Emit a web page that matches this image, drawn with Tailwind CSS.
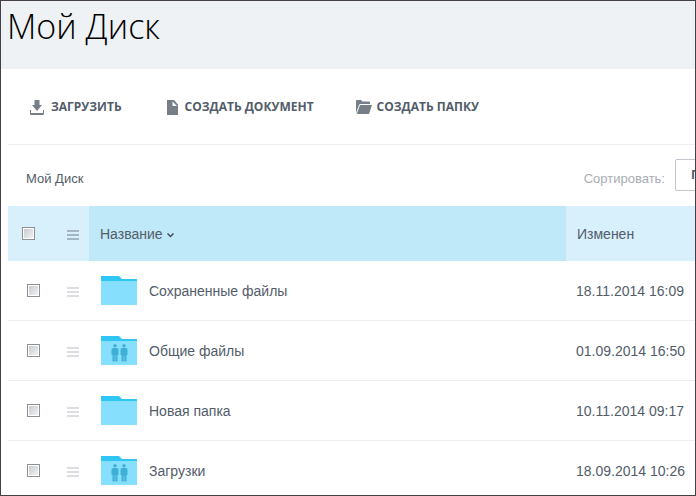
<!DOCTYPE html>
<html lang="ru">
<head>
<meta charset="utf-8">
<title>Мой Диск</title>
<script src="https://cdn.jsdelivr.net/npm/@tailwindcss/browser@4"></script>
</head>
<body class="h-screen overflow-hidden border border-[#444046] bg-white font-['Liberation_Sans',Arial,sans-serif] text-sm text-[#535c69]">
<svg class="hidden">
  <symbol id="folder" viewBox="0 0 36 29">
    <path d="M0 0H18L21 3H36V29H0Z" fill="#2fc6f7"/>
    <path d="M0 5H36V29H0Z" fill="#86dffc"/>
  </symbol>
  <symbol id="person" viewBox="0 0 8 18">
    <circle cx="4" cy="1.8" r="1.700"/>
    <path d="M2 4H6Q7.500 4 7.500 5.500V11H6.500V17.500H4.300V11.500H3.700V17.500H1.500V11H.5V5.500Q.5 4 2 4Z"/>
  </symbol>
  <symbol id="shared" viewBox="0 0 36 29">
    <use href="#folder" width="36" height="29"/>
    <g fill="#3fafd8"><use href="#person" x="10" y="8" width="8" height="18"/><use href="#person" x="19" y="8" width="8" height="18"/></g>
  </symbol>
  <symbol id="bars" viewBox="0 0 12 10">
    <path d="M0 0H12V2H0ZM0 4H12V6H0ZM0 8H12V10H0Z"/>
  </symbol>
</svg>

<header class="h-17 bg-[#eef2f4] pl-[6px]">
  <h1 class="font-['Open_Sans',sans-serif] text-[34px] leading-[50px] font-light text-black">Мой Диск</h1>
</header>

<main class="pl-[7px]">
  <nav class="flex h-19 items-center border-b border-[#eceef0] pt-px pl-[22px] font-['Open_Sans',sans-serif] text-xs leading-5 font-bold text-[#535c69]" aria-label="Действия">
    <button type="button" class="flex items-center gap-[7px] whitespace-nowrap">
      <svg class="h-[15px] w-[14px]" viewBox="0 0 14 15" fill="#767f88"><path d="M4.500 0H9.500V5H12L7 11L2 5H4.500Z"/><path d="M0 10H1V13H13V10H14V14Q14 15 13 15H1Q0 15 0 14Z"/></svg>
      ЗАГРУЗИТЬ</button>
    <button type="button" class="ml-[45px] flex items-center gap-[7px] whitespace-nowrap">
      <svg class="h-[15px] w-[11px]" viewBox="0 0 11 15" fill="#767f88"><path fill-rule="evenodd" d="M0 0H7L11 4.500V15H0ZM5.500 1.500V6H10Z"/></svg>
      СОЗДАТЬ ДОКУМЕНТ</button>
    <button type="button" class="ml-[42px] flex items-center gap-[5px] whitespace-nowrap">
      <svg class="h-[14px] w-4" viewBox="0 0 16 14" fill="#767f88"><path d="M0 13V1Q0 0 1 0H5L6.500 1.500H13Q14 1.500 14 2.500V4H4.500Q3.500 4 3 5Z"/><path d="M4.500 5H16L13 14H.8L3.800 5.500Z"/></svg>
      СОЗДАТЬ ПАПКУ</button>
  </nav>

  <div class="flex h-[61px] items-center justify-between overflow-hidden pl-[18px] text-[13px]">
    <a href="#" class="pt-2">Мой Диск</a>
    <div class="-mr-[140px] flex items-center gap-[10px] pb-px">
      <label for="sort" class="pt-2 text-[#a8adb4]">Сортировать:</label>
      <select id="sort" class="h-8 w-40 appearance-none rounded-[2px] border border-[#c2c6cc] bg-white pl-[15px] font-['Open_Sans',sans-serif] text-xs font-bold text-[#535c69]"><option>По названию</option></select>
    </div>
  </div>

  <table class="w-full table-fixed border-separate border-spacing-0 text-left">
    <colgroup><col class="w-[49px]"><col class="w-8"><col><col class="w-[129px]"></colgroup>
    <thead>
      <tr class="h-[55px] bg-[#d7f0fc]">
        <th class="pl-[14px]"><input type="checkbox" aria-label="Выбрать все" class="block size-[13px] appearance-none border border-[#8e8f8f] bg-linear-to-br from-[#c3c8ce] to-[#f6f6f6] ring-1 ring-white ring-inset"></th>
        <th class="pl-[10px]"><button type="button" aria-label="Меню" class="block pt-[2px]"><svg class="h-[10px] w-3 fill-[#a3b5c2]"><use href="#bars"/></svg></button></th>
        <th class="bg-[#bfe9f8] pl-[11px] font-normal"><button type="button" class="flex items-center gap-1">Название<svg class="mt-[3px] h-[5px] w-[7px]" viewBox="0 0 7 5" fill="none" stroke="#3f4d62" stroke-width="1.500"><path d="M.5 .5L3.500 3.500L6.500 .5"/></svg></button></th>
        <th class="pl-[11px] font-normal">Изменен</th>
      </tr>
    </thead>
    <tbody>
      <tr class="h-[60px] *:border-b *:border-[#eceef0]">
        <td class="pl-[19px]"><input type="checkbox" aria-label="Сохраненные файлы" class="block size-[13px] appearance-none border border-[#8e8f8f] bg-linear-to-br from-[#c3c8ce] to-[#f6f6f6] ring-1 ring-white ring-inset"></td>
        <td class="pl-[10px]"><button type="button" aria-label="Меню" class="block pt-[2px]"><svg class="h-[10px] w-3 fill-[#dcdee3]"><use href="#bars"/></svg></button></td>
        <td class="pl-3"><a href="#" class="flex items-center gap-3"><svg class="h-[29px] w-9"><use href="#folder"/></svg>Сохраненные файлы</a></td>
        <td class="pl-[10px] whitespace-nowrap">18.11.2014 16:09</td>
      </tr>
      <tr class="h-[60px] *:border-b *:border-[#eceef0]">
        <td class="pl-[19px]"><input type="checkbox" aria-label="Общие файлы" class="block size-[13px] appearance-none border border-[#8e8f8f] bg-linear-to-br from-[#c3c8ce] to-[#f6f6f6] ring-1 ring-white ring-inset"></td>
        <td class="pl-[10px]"><button type="button" aria-label="Меню" class="block pt-[2px]"><svg class="h-[10px] w-3 fill-[#dcdee3]"><use href="#bars"/></svg></button></td>
        <td class="pl-3"><a href="#" class="flex items-center gap-3"><svg class="h-[29px] w-9"><use href="#shared"/></svg>Общие файлы</a></td>
        <td class="pl-[10px] whitespace-nowrap">01.09.2014 16:50</td>
      </tr>
      <tr class="h-[60px] *:border-b *:border-[#eceef0]">
        <td class="pl-[19px]"><input type="checkbox" aria-label="Новая папка" class="block size-[13px] appearance-none border border-[#8e8f8f] bg-linear-to-br from-[#c3c8ce] to-[#f6f6f6] ring-1 ring-white ring-inset"></td>
        <td class="pl-[10px]"><button type="button" aria-label="Меню" class="block pt-[2px]"><svg class="h-[10px] w-3 fill-[#dcdee3]"><use href="#bars"/></svg></button></td>
        <td class="pl-3"><a href="#" class="flex items-center gap-3"><svg class="h-[29px] w-9"><use href="#folder"/></svg>Новая папка</a></td>
        <td class="pl-[10px] whitespace-nowrap">10.11.2014 09:17</td>
      </tr>
      <tr class="h-[60px] *:border-b *:border-[#eceef0]">
        <td class="pl-[19px]"><input type="checkbox" aria-label="Загрузки" class="block size-[13px] appearance-none border border-[#8e8f8f] bg-linear-to-br from-[#c3c8ce] to-[#f6f6f6] ring-1 ring-white ring-inset"></td>
        <td class="pl-[10px]"><button type="button" aria-label="Меню" class="block pt-[2px]"><svg class="h-[10px] w-3 fill-[#dcdee3]"><use href="#bars"/></svg></button></td>
        <td class="pl-3"><a href="#" class="flex items-center gap-3"><svg class="h-[29px] w-9"><use href="#shared"/></svg>Загрузки</a></td>
        <td class="pl-[10px] whitespace-nowrap">18.09.2014 10:26</td>
      </tr>
    </tbody>
  </table>
</main>
</body>
</html>
